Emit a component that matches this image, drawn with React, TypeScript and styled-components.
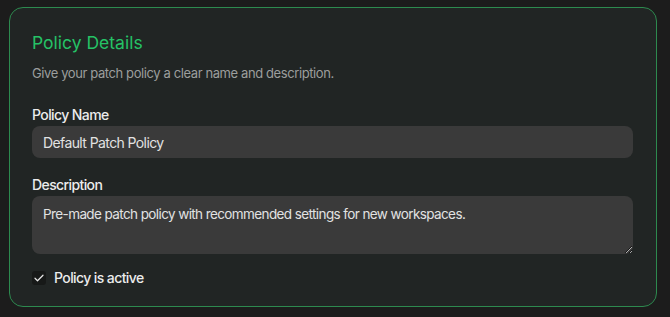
import styled, { createGlobalStyle } from "styled-components";

const GlobalStyle = createGlobalStyle`
  html, body {
    margin: 0;
    padding: 0;
    background: #1c1c1c;
  }
  body {
    font-family: Inter, "Noto Sans", "Liberation Sans", sans-serif;
    -webkit-font-smoothing: antialiased;
  }
`;

export default function App() {
  return (
    <>
      <GlobalStyle />
      <Page>
        <Card>
          <Title>Policy Details</Title>
          <Subtitle>Give your patch policy a clear name and description.</Subtitle>

          <Field>
            <Label htmlFor="policy-name">Policy Name</Label>
            <TextInput id="policy-name" defaultValue="Default Patch Policy" />
          </Field>

          <Field>
            <Label htmlFor="policy-desc">Description</Label>
            <TextArea
              id="policy-desc"
              defaultValue="Pre-made patch policy with recommended settings for new workspaces."
            />
          </Field>

          <CheckRow>
            <CheckBox>
              <svg width="12" height="12" viewBox="0 0 24 24" fill="none">
                <path
                  d="M4 12.5l5 5L20 6.5"
                  stroke="#e8e8e8"
                  strokeWidth="2.4"
                  strokeLinecap="round"
                  strokeLinejoin="round"
                />
              </svg>
            </CheckBox>
            <CheckLabel>Policy is active</CheckLabel>
          </CheckRow>
        </Card>
      </Page>
    </>
  );
}

const Page = styled.div`
  padding: 7px 13px 10px 9px;
`;

const Card = styled.section`
  box-sizing: border-box;
  width: 648px;
  height: 300px;
  padding: 23px 23px 0 22px;
  background: #212524;
  border: 1px solid #2d8a4f;
  border-radius: 14px;
  display: flex;
  flex-direction: column;
`;

const Title = styled.h2`
  margin: 0;
  font-size: 17.5px;
  line-height: 24px;
  font-weight: 400;
  color: #25c266;
`;

const Subtitle = styled.p`
  margin: 9px 0 0;
  font-size: 13px;
  line-height: 18px;
  letter-spacing: -0.4px;
  color: #9c9e9d;
`;

const Field = styled.div`
  display: flex;
  flex-direction: column;
  gap: 2px;
  margin-top: 24px;

  & + & {
    margin-top: 18px;
  }
`;

const Label = styled.label`
  font-size: 14px;
  line-height: 18px;
  font-weight: 500;
  letter-spacing: -0.6px;
  color: #ececec;
`;

const inputBase = `
  box-sizing: border-box;
  width: 100%;
  border: none;
  outline: none;
  background: #3a3a3a;
  border-radius: 8px;
  color: #e2e2e2;
  font-family: Inter, "Noto Sans", "Liberation Sans", sans-serif;
  font-size: 14px;
  letter-spacing: -0.6px;
`;

const TextInput = styled.input`
  ${inputBase}
  height: 32px;
  padding: 0 11px;
`;

const TextArea = styled.textarea`
  ${inputBase}
  height: 58px;
  padding: 9px 11px;
  font-size: 13.5px;
  line-height: 18px;
  resize: vertical;
`;

const CheckRow = styled.label`
  display: flex;
  align-items: center;
  gap: 8px;
  margin-top: 15px;
`;

const CheckBox = styled.span`
  width: 14px;
  height: 14px;
  border-radius: 3px;
  background: #171918;
  display: flex;
  align-items: center;
  justify-content: center;
`;

const CheckLabel = styled.span`
  font-size: 14px;
  line-height: 18px;
  font-weight: 500;
  letter-spacing: -0.6px;
  color: #ececec;
`;
